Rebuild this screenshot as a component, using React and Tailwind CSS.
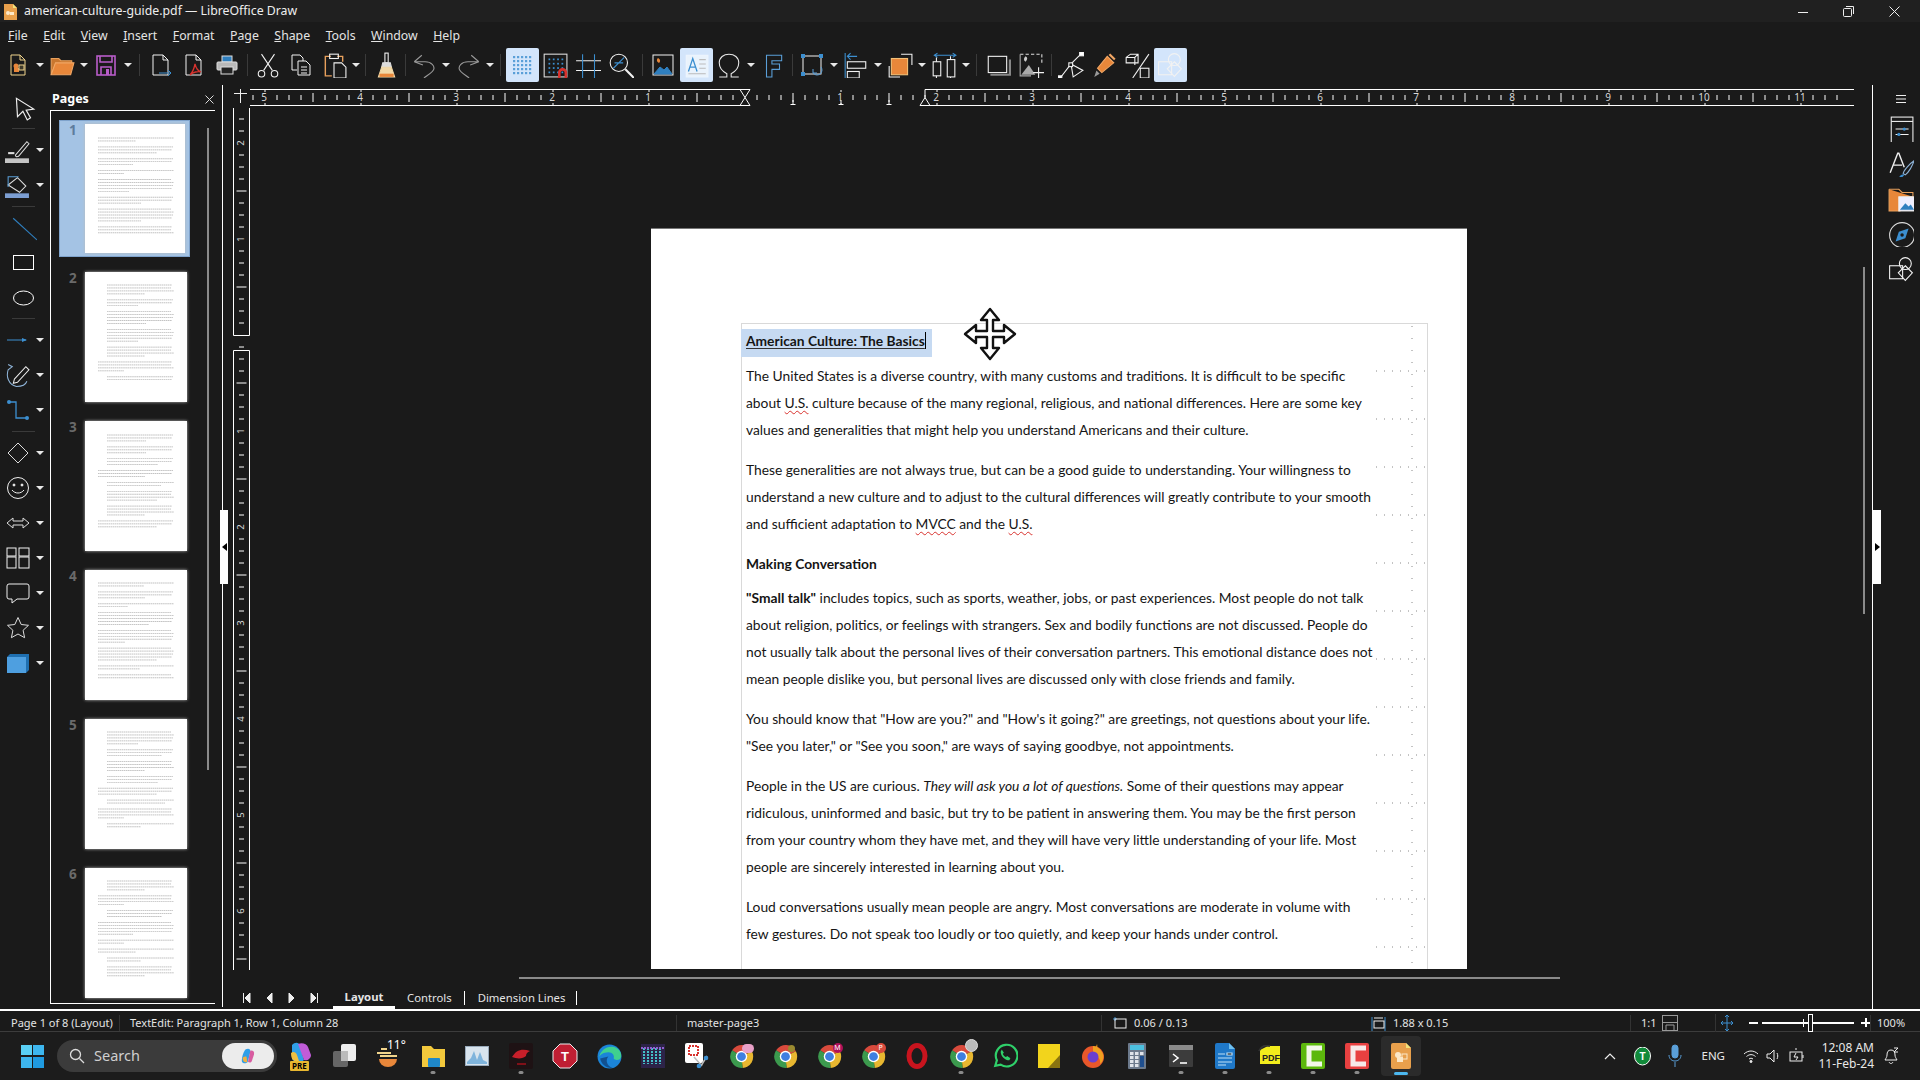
import React from 'react';

// small helpers for the drawn icons
const Svg = ({ size = 24, children, className = '' }) => (
  <svg width={size} height={size} viewBox="0 0 24 24" fill="none" stroke="#f2f2f2" strokeWidth="1" className={className}>
    {children}
  </svg>
);

const Caret = () => <span className="w-0 h-0 border-l-[4px] border-r-[4px] border-t-[4px] border-l-transparent border-r-transparent border-t-[#e8e8e8]" />;

// top toolbar icons
const icons = {
  newDoc: <Svg><path d="M5 2h9l5 5v15H5z" stroke="#f0d48c" /><path d="M14 2v5h5" stroke="#f0d48c" /><circle cx="10" cy="13" r="2.5" fill="#e8873a" stroke="none" /><rect x="8" y="15" width="5" height="4" fill="#e8873a" stroke="none" /><rect x="13" y="12" width="5" height="5" fill="#3f3a2a" stroke="#f0d48c" /></Svg>,
  open: <Svg size={26}><path d="M2 6h7l2 2h10v3H6l-4 10z" fill="#c9772f" stroke="#e8a05c" /><path d="M6 10h17l-3 11H2z" fill="#e8873a" stroke="#f0a765" /></Svg>,
  save: <Svg><rect x="3" y="3" width="18" height="19" stroke="#b85cc9" strokeWidth="1.6" /><path d="M6 3v6h12V3M7 22v-8h10v8" stroke="#b85cc9" strokeWidth="1.6" /><rect x="12" y="16" width="3" height="6" fill="#b85cc9" stroke="none" /></Svg>,
  exportDoc: <Svg><path d="M4 2h10l5 5v15H4z" /><path d="M14 2v5h5" /><path d="M10 20h12m-3-3 3 3-3 3" stroke="#3c8fd0" /></Svg>,
  pdf: <Svg><path d="M4 2h10l5 5v15H4z" /><path d="M14 2v5h5" /><path d="M13 11c-1 5-3 9-5 11 3-3 8-4 11-3-3-1-5-4-6-8z" stroke="#d8322e" strokeWidth="1.3" /></Svg>,
  print: <Svg size={24}><rect x="7" y="3" width="10" height="6" fill="#2f7fbf" stroke="#ddd" /><rect x="2" y="9" width="20" height="8" rx="1" fill="#b9b9b9" stroke="#ddd" /><rect x="6" y="14" width="12" height="7" fill="#222" stroke="#ddd" /></Svg>,
  cut: <Svg size={26}><path d="M6 2l10 15M18 2 8 17" /><circle cx="6" cy="20" r="3" /><circle cx="18" cy="20" r="3" /></Svg>,
  copy: <Svg><path d="M3 2h8l3 3v3M3 2v15h5" /><path d="M9 8h8l4 4v10H9z" /><path d="M12 14h6M12 17h6M12 20h6" /></Svg>,
  paste: <Svg size={26}><path d="M9 4H4v18h6M15 4h5v5" stroke="#e8a05c" strokeWidth="1.3" /><rect x="8" y="2" width="8" height="4" stroke="#f2f2f2" /><path d="M12 10h7l4 4v10H12z" fill="#1a1a1a" /></Svg>,
  clone: <Svg size={26}><rect x="11" y="1" width="3" height="9" fill="#1a1a1a" /><path d="M9 10h7l1 4H8z" fill="#ddd" stroke="#ddd" /><path d="M8 14h9l3 9H5z" fill="#f2d9a8" stroke="#f2d9a8" /><path d="M6 20h13v3H6z" fill="#e8873a" stroke="none" /></Svg>,
  undo: <Svg size={26}><path d="M3 9l7-6M3 9l8 3M3 9h10c6 0 9 4 8 7-1 3-7 6-9 8" stroke="#9a9a9a" /></Svg>,
  redo: <Svg size={26}><path d="M22 9l-7-6M22 9l-8 3M22 9H12c-6 0-9 4-8 7 1 3 7 6 9 8" stroke="#9a9a9a" /></Svg>,
  grid: <Svg><g fill="#5a9fd8" stroke="none">{[4, 8, 12, 16, 20].flatMap((x) => [4, 8, 12, 16, 20].map((y) => <rect key={`${x}-${y}`} x={x - 1} y={y - 1} width="2.2" height="2.2" />))}</g></Svg>,
  snap: <Svg size={26}><rect x="2" y="2" width="21" height="21" stroke="#ddd" /><g fill="#3c8fd0" stroke="none">{[6, 10, 14, 18].flatMap((x) => [6, 10, 14, 18].map((y) => <rect key={`${x}-${y}`} x={x} y={y} width="1.6" height="1.6" />))}</g><path d="M16 24v-5a2.5 2.5 0 0 1 6 0v5" stroke="#d8322e" strokeWidth="2.4" /></Svg>,
  helplines: <Svg size={26}><path d="M1 8h24M1 17h24" /><path d="M7 2v23M18 2v23" stroke="#3c8fd0" /></Svg>,
  zoom: <Svg size={26}><circle cx="10" cy="10" r="8" /><path d="M16 16l8 8" strokeWidth="2" /><path d="M5 15 15 5M6 10h8" stroke="#3c8fd0" /></Svg>,
  image: <Svg size={24}><rect x="2" y="2" width="20" height="20" /><path d="M3 21l6-7 4 3 3-3 5 7z" fill="#2f7fbf" stroke="#2f7fbf" /><path d="M7 5c2 1 3 3 1 5-2-1-3-3-1-5z" fill="#e8873a" stroke="none" /></Svg>,
  textbox: <Svg size={26}><path d="M3 3h20v20H3z" stroke="#eef5fd" fill="#eaf3fc" /><path d="M5 18l4-12 4 12M6.5 14h5" stroke="#3c8fd0" strokeWidth="1.2" /><path d="M15 7h6M15 11h6M15 15h6M5 20h16" stroke="#bbb" /></Svg>,
  omega: <Svg size={26}><path d="M3 23h7v-3c-4-2-7-5-7-10 0-5 4-8 9-8s9 3 9 8c0 5-3 8-7 10v3h7" stroke="#e8e8e8" /></Svg>,
  fontwork: <Svg size={26}><path d="M6 3h14v5h-9v3h7v5h-7v7H6z" stroke="#5a9fd8" /></Svg>,
  transform: <Svg size={24}><rect x="3" y="3" width="18" height="18" /><g fill="#3c8fd0" stroke="none"><rect x="1" y="1" width="4" height="4" /><rect x="19" y="1" width="4" height="4" /><rect x="1" y="19" width="4" height="4" /></g><path d="M21 14a5 5 0 1 1-8 6m0-4v4h4" stroke="#5a9fd8" /></Svg>,
  align: <Svg size={26}><path d="M2 1v24" stroke="#3c8fd0" /><path d="M13 4H4m3-3-3 3 3 3" stroke="#3c8fd0" /><rect x="4" y="9" width="17" height="6" /><rect x="4" y="18" width="11" height="6" /></Svg>,
  arrange: <Svg size={26}><path d="M13 2h10v10M2 13v10h10" /><rect x="4" y="6" width="15" height="15" fill="#e8873a" stroke="#f2c078" /></Svg>,
  distribute: <Svg size={26}><path d="M3 3h20M6 1l-3 2 3 2M20 1l3 2-3 2" stroke="#3c8fd0" /><rect x="2" y="9" width="7" height="13" /><rect x="15" y="7" width="7" height="16" /><path d="M5 5v4M5 22v2M18 4v3M18 23v1" /></Svg>,
  shadow: <Svg size={26}><rect x="3" y="4" width="17" height="15" /><path d="M5 21h18V7" stroke="#888" strokeWidth="2" /></Svg>,
  crop: <Svg size={26}><path d="M2 2h20v10" stroke="#ddd" strokeDasharray="3 2" /><path d="M2 2v20h10" stroke="#aaa" /><path d="M3 21l7-9 6 9z" fill="#aaa" stroke="none" /><path d="M7 4c2 1 2 3 0 5-2-1-2-3 0-5z" fill="#ccc" stroke="none" /><path d="M14 19h10M19 14v10" /></Svg>,
  points: <Svg size={26}><path d="M2 24 12 11 22 1" /><path d="M12 11l2 12 9-6z" /><rect x="0" y="22" width="3.5" height="3.5" fill="#fff" /><rect x="20" y="0" width="3.5" height="3.5" fill="#fff" /><rect x="10" y="10" width="3.5" height="3.5" fill="#1a1a1a" /></Svg>,
  glue: <Svg size={26}><path d="M3 23l2-6 3 3z" fill="#999" stroke="none" /><path d="M6 15 15 4l6 6-11 9z" fill="#e8873a" stroke="#f2a765" /><path d="M17 2l5 5" stroke="#f2a765" strokeWidth="2" /></Svg>,
  extrusion: <Svg size={26}><path d="M2 5l4-3h7v8H2zM2 5h8v7M13 2l-3 3" /><path d="M23 2 8 24" /><rect x="15" y="15" width="8" height="9" /></Svg>,
  shapes: <Svg size={26}><rect x="1.5" y="9" width="12" height="12" /><circle cx="16" cy="7" r="5.5" /><path d="M16 9l6.5 6.5-6.5 7-6.5-7z" /></Svg>,
};

const toolbar = [
  ['i', 'newDoc'], 'd', ['i', 'open'], 'd', ['i', 'save'], 'd', ['s', 'w-[11px]'],
  ['i', 'exportDoc'], ['i', 'pdf'], ['i', 'print'], ['s', 'w-[8px]'],
  ['i', 'cut'], ['i', 'copy'], ['i', 'paste'], 'd', ['s', 'w-[8px]'],
  ['i', 'clone'], ['s', 'w-[5px]'],
  ['i', 'undo'], 'd', ['i', 'redo'], 'd', ['s', 'w-[10px]'],
  ['a', 'grid'], ['i', 'snap'], ['i', 'helplines'], ['i', 'zoom'], ['s', 'w-[9px]'],
  ['i', 'image'], ['a', 'textbox'], ['i', 'omega'], 'd', ['i', 'fontwork'], ['s', 'w-[6px]'],
  ['i', 'transform'], 'd', ['i', 'align'], 'd', ['i', 'arrange'], 'd', ['i', 'distribute'], 'd', ['s', 'w-[10px]'],
  ['i', 'shadow'], ['i', 'crop'], ['s', 'w-[7px]'],
  ['i', 'points'], ['i', 'glue'], ['i', 'extrusion'], ['a', 'shapes'],
];

const Toolbar = () => (
  <div className="flex items-center h-[39px] pl-[1.5px] pb-[2px] bg-[#1a1a1a]">
    {toolbar.map((item, i) => {
      if (item === 'd') return <div key={i} className="w-[11px] flex justify-center"><Caret /></div>;
      const [kind, name] = item;
      if (kind === 's') return <div key={i} className={`${name} flex justify-center`}><div className="w-px h-[22px] bg-[#3a3a3a]" /></div>;
      return (
        <div key={i} className={`w-[33px] h-[34px] flex items-center justify-center rounded-[2px] ${kind === 'a' ? 'bg-[#d3e5fb]' : ''}`}>
          {icons[name]}
        </div>
      );
    })}
  </div>
);

const menus = [['F', 'ile'], ['E', 'dit'], ['V', 'iew'], ['I', 'nsert'], ['F', 'ormat'], ['P', 'age'], ['S', 'hape'], ['T', 'ools'], ['W', 'indow'], ['H', 'elp']];

const HRuler = () => {
  const ticks = [];
  for (let x = 746 - 12 * 41; x < 1850; x += 12) {
    const k = Math.round((x - 746) / 12);
    if (x < 252) continue;
    const px = x - 251;
    const inMargin = x > 746 && x < 926;
    if (k % 8 === 0) {
      const n = Math.abs(k / 8);
      ticks.push(<path key={x} d={`M${px} 1v2M${px} 14v2`} stroke="#fff" />);
      if (n !== 0) ticks.push(<text key={`t${x}`} x={px - 1} y="12" fontSize="10" fill="#d8d8d8" textAnchor="middle" fontFamily="Noto Sans, sans-serif">{n}</text>);
    } else if (k % 4 === 0) {
      ticks.push(<path key={x} d={`M${px} 4v9`} stroke="#fff" />);
    } else {
      ticks.push(<path key={x} d={`M${px} 6v5`} stroke="#fff" />);
    }
    if (inMargin && k % 4 === 0) ticks.push(<path key={`b${x}`} d={`M${px} 11v5M${px - 2.5} 15.5h5`} stroke="#fff" />);
  }
  return (
    <svg width="1605" height="17" className="block">
      <path d="M0 .5H491M675 .5H1604M0 16.5H491M675 16.5H1604" stroke="#fff" />
      {ticks}
      <path d="M490 .5h10l-5 8 5 8h-10l5-8z" stroke="#fff" fill="#1a1a1a" />
      <path d="M670 16.5h10l-5-8z" stroke="#fff" fill="#1a1a1a" />
      <path d="M675 8V.5" stroke="#fff" />
    </svg>
  );
};

const VRuler = () => {
  const marks = [];
  for (let k = -19; k < 64; k++) {
    const y = 230 + k * 12;
    if (y < 6 || y > 864 || k === 0) continue;
    if (k % 8 === 0) {
      marks.push(<text key={k} x="8.5" y={y} fontSize="9.5" fill="#d8d8d8" textAnchor="middle" dominantBaseline="middle" fontFamily="Noto Sans, sans-serif" transform={`rotate(-90 8.5 ${y})`}>{Math.abs(k / 8)}</text>);
    } else if (k % 4 === 0) {
      marks.push(<path key={k} d={`M3.5 ${y}h10`} stroke="#fff" />);
    } else {
      marks.push(<path key={k} d={`M6 ${y}h5`} stroke="#fff" />);
    }
  }
  return (
    <svg width="17" height="865" className="block">
      <path d="M.5 3v227.5h16V3" stroke="#fff" fill="none" />
      <path d="M.5 865V245.5h16V865" stroke="#fff" fill="none" />
      {marks}
    </svg>
  );
};

// miniature page: paragraphs of thin grey lines
const thumbLines = (n) => {
  const out = [];
  let seed = n * 13 + 5;
  let y = n === 1 || n === 3 ? 14 : 13;
  const bullets = n === 2 || n === 3 || n === 5 || n === 6;
  while (y < 109) {
    seed = (seed * 31 + 11) % 97;
    const count = 2 + (seed % 4);
    const indent = bullets && seed % 3 !== 0 ? 9 : 0;
    for (let i = 0; i < count && y < 109; i++) {
      const full = 76 - indent;
      const w = i === count - 1 ? 26 + ((seed * (i + 3)) % 36) : full - ((seed + i * 5) % 4);
      out.push([indent, y, w]);
      y += 2.95;
    }
    y += 3;
  }
  return out;
};

const Thumb = ({ n, selected }) => (
  <div className={`flex w-[131px] ml-[8px] ${selected ? 'h-[137px] mb-[15px] bg-[#a4c3e4] border border-[#7fa3cc] pl-[9px] pt-[3px]' : 'h-[131px] mb-[18px] pl-[10px]'}`}>
    <div className={`w-[16px] text-[13.5px] font-bold leading-[12px] ${selected ? 'text-[#5e7c9d]' : 'text-[#6a6a6a]'}`}>{n}</div>
    <svg width={selected ? 100 : 102} height={selected ? 129 : 130} className="bg-white shadow-[0_0_3px_#bbb] shrink-0">
      {thumbLines(n).map(([x, y, w], i) => (
        <path key={i} d={`M${13 + x} ${y}h${w}`} stroke="#666" strokeWidth="0.6" strokeDasharray="1.6 0.5" opacity="0.65" />
      ))}
    </svg>
  </div>
);

const PagesPanel = () => (
  <div className="w-[165px] flex flex-col h-full pb-[5px]">
    <div className="h-[25px] flex items-center justify-between pl-[2px] pr-[1px] pt-[3px] text-white text-[12.5px] font-bold">
      <span>Pages</span>
      <svg width="9" height="9" viewBox="0 0 9 9" stroke="#ddd"><path d="M.5.5l8 8M8.5.5l-8 8" /></svg>
    </div>
    <div className="relative flex-1 border-t border-l border-b border-white overflow-hidden pt-[9px]">
      {[1, 2, 3, 4, 5, 6].map((n) => <Thumb key={n} n={n} selected={n === 1} />)}
      <div className="absolute right-[6px] top-[17px] w-[2px] h-[642px] bg-[#8a8a8a]" />
    </div>
  </div>
);

const toolIcons = [
  { i: <Svg size={26}><path d="M5 3l1 17 5-5 4 8 3-2-4-7 7-1z" stroke="#eee" strokeWidth="1.1" /></Svg>, c: true },
  'sep',
  { i: <Svg size={26}><path d="M10 17 21 4l2 2-10 12c-2 1-3 0-3-1z" stroke="#ddd" /><path d="M3 15h6" stroke="#ddd" strokeWidth="2" /><rect x="0" y="20" width="23" height="5" fill="#c4c4c4" stroke="none" /></Svg> },
  { i: <Svg size={26}><path d="M3 12 12 5l8 8-6 6z" stroke="#ddd" /><path d="M3 14V4h10" stroke="#5a9fd8" /><rect x="0" y="20" width="23" height="5" fill="#7c9ed2" stroke="none" /></Svg> },
  'sep',
  { i: <Svg size={26}><path d="M2 3l22 20" stroke="#2f7fbf" /></Svg>, c: true },
  { i: <svg width="22" height="16"><rect x=".5" y=".5" width="20" height="14" stroke="#fff" fill="none" /></svg>, c: true },
  { i: <svg width="22" height="16"><ellipse cx="10.5" cy="8" rx="10" ry="7" stroke="#fff" fill="none" /></svg>, c: true },
  'sep',
  { i: <Svg><path d="M1 12h19" stroke="#3c8fd0" /><path d="M16 10l5 2-5 2z" fill="#3c8fd0" stroke="none" /></Svg> },
  { i: <Svg size={26}><path d="M3 2l4 2-4 3c-2 6 0 14 8 16 5 0 9-2 10-5" stroke="#8fb4d8" /><path d="M9 16 20 4l3 3-11 12-4 1z" stroke="#eee" /></Svg> },
  { i: <Svg><circle cx="3" cy="4" r="2" fill="#3c8fd0" stroke="none" /><circle cx="21" cy="20" r="2" fill="#3c8fd0" stroke="none" /><path d="M3 4h7v16h11" stroke="#3c8fd0" strokeWidth="1.3" /></Svg> },
  'sep',
  { i: <Svg><path d="M12 2l10 10-10 10L2 12z" stroke="#ddd" /></Svg> },
  { i: <Svg><circle cx="12" cy="12" r="10.5" stroke="#eee" /><circle cx="8" cy="9" r="1" fill="#eee" /><circle cx="16" cy="9" r="1" fill="#eee" /><path d="M6 14c3 4 9 4 12 0" /></Svg> },
  { i: <Svg size={24}><path d="M1 12l6-5v3h10V7l6 5-6 5v-3H7v3z" stroke="#ddd" /></Svg> },
  { i: <Svg><rect x="1" y="2" width="9" height="8" /><rect x="13" y="2" width="10" height="8" /><rect x="1" y="11" width="9" height="11" /><rect x="13" y="11" width="10" height="11" /></Svg> },
  { i: <Svg><path d="M3 3h18a2 2 0 0 1 2 2v11a2 2 0 0 1-2 2H11l-5 4v-4H3a2 2 0 0 1-2-2V5a2 2 0 0 1 2-2z" stroke="#eee" /></Svg> },
  { i: <Svg><path d="M12 1.5l3.2 7 7.3.8-5.4 5 1.5 7.4L12 18l-6.6 3.7 1.5-7.4-5.4-5 7.3-.8z" stroke="#ddd" /></Svg> },
  { i: <Svg><path d="M1 6l3-3h19v16l-3 3H1z" fill="#1f6fb0" stroke="none" /><path d="M1 6h19v16H1z" fill="#4e9fe0" stroke="none" /></Svg> },
];

const LeftTools = () => (
  <div className="w-[50px] flex flex-col pt-[5px]">
    {toolIcons.map((t, i) => {
      if (t === 'sep') return <div key={i} className="h-[7.5px] flex items-center pl-[12px]"><div className="w-[23px] h-px bg-[#3a3a3a]" /></div>;
      return (
        <div key={i} className={`h-[35px] flex items-center ${t.c ? 'justify-center pr-[2px]' : 'pl-[5px] gap-[6px]'}`}>
          <div className={`flex justify-center ${t.c ? '' : 'w-[25px]'}`}>{t.i}</div>
          {!t.c && <Caret />}
        </div>
      );
    })}
  </div>
);

const Squiggle = ({ children }) => <span className="underline decoration-wavy decoration-[#d8322e] decoration-1 underline-offset-2">{children}</span>;

const Line = ({ children, className = '' }) => (
  <div className={`h-[27px] leading-[27px] whitespace-nowrap ${className}`}>{children}</div>
);

const DocGuides = () => (
  <svg width="52" height="660" className="absolute right-0 top-0">
    <path d="M37 2V660" stroke="#888" strokeDasharray="1 11" />
    {Array.from({ length: 13 }).map((_, i) => (
      <path key={i} d={`M1 ${47 + i * 48}H50`} stroke="#888" strokeDasharray="1 7" />
    ))}
  </svg>
);

const Page = () => (
  <div className="ml-[401px] mt-[123px] w-[816px] h-[1056px] bg-white shrink-0 pl-[90px] pt-[94px] border-t border-[#777]">
    <div className="relative w-[687px] h-[900px] border border-[#d9d9d9] pt-[3px] pl-[4px] font-['Lato',sans-serif] text-[13.8px] text-[#151515]">
      <div className="h-[27px] mb-[8px] leading-[27px] relative">
        <span className="absolute -left-[5px] top-[2px] w-[191px] h-[28px] bg-[#c6daf2]" />
        <span className="relative font-bold underline decoration-[#333] underline-offset-2 border-r border-black whitespace-nowrap">American Culture: The Basics</span>
      </div>
      <div className="mb-[13px]">
        <Line>The United States is a diverse country, with many customs and traditions. It is difficult to be specific</Line>
        <Line>about <Squiggle>U.S.</Squiggle> culture because of the many regional, religious, and national differences. Here are some key</Line>
        <Line>values and generalities that might help you understand Americans and their culture.</Line>
      </div>
      <div className="mb-[13px]">
        <Line>These generalities are not always true, but can be a good guide to understanding. Your willingness to</Line>
        <Line>understand a new culture and to adjust to the cultural differences will greatly contribute to your smooth</Line>
        <Line>and sufficient adaptation to <Squiggle>MVCC</Squiggle> and the <Squiggle>U.S.</Squiggle></Line>
      </div>
      <Line className="mb-[7px] font-bold">Making Conversation</Line>
      <div className="mb-[13px]">
        <Line><b>"Small talk"</b> includes topics, such as sports, weather, jobs, or past experiences. Most people do not talk</Line>
        <Line>about religion, politics, or feelings with strangers. Sex and bodily functions are not discussed. People do</Line>
        <Line>not usually talk about the personal lives of their conversation partners. This emotional distance does not</Line>
        <Line>mean people dislike you, but personal lives are discussed only with close friends and family.</Line>
      </div>
      <div className="mb-[13px]">
        <Line>You should know that "How are you?" and "How's it going?" are greetings, not questions about your life.</Line>
        <Line>"See you later," or "See you soon," are ways of saying goodbye, not appointments.</Line>
      </div>
      <div className="mb-[13px]">
        <Line>People in the US are curious. <i>They will ask you a lot of questions.</i> Some of their questions may appear</Line>
        <Line>ridiculous, uninformed and basic, but try to be patient in answering them. You may be the first person</Line>
        <Line>from your country whom they have met, and they will have very little understanding of your life. Most</Line>
        <Line>people are sincerely interested in learning about you.</Line>
      </div>
      <div className="mb-[13px]">
        <Line>Loud conversations usually mean people are angry. Most conversations are moderate in volume with</Line>
        <Line>few gestures. Do not speak too loudly or too quietly, and keep your hands under control.</Line>
      </div>
      <Line className="font-bold">Friendship and Dating</Line>
      <DocGuides />
    </div>
  </div>
);

const MoveCursor = () => (
  <svg width="54" height="54" viewBox="0 0 54 54" className="absolute left-[713px] top-[202px]">
    <path d="M27 2l9 11h-6v11h11v-6l11 9-11 9v-6H30v11h6l-9 11-9-11h6V30H13v6L2 27l11-9v6h11V13h-6z" fill="#fff" stroke="#111" strokeWidth="2.4" strokeLinejoin="round" />
  </svg>
);

const Handle = ({ dir, className }) => (
  <div className={`absolute w-[8px] h-[74px] bg-white flex items-center justify-center ${className}`}>
    <span className={`w-0 h-0 border-t-[4px] border-b-[4px] border-t-transparent border-b-transparent ${dir === 'l' ? 'border-r-[5px] border-r-black' : 'border-l-[5px] border-l-black'}`} />
  </div>
);

const sideIcons = [
  <Svg size={26}><rect x="3" y="1" width="20" height="24" stroke="#eee" /><path d="M3 5h20" /><path d="M7 12h12M7 17h12" /><circle cx="15" cy="12" r="1.5" fill="#3c8fd0" stroke="none" /><circle cx="10" cy="17" r="1.5" fill="#3c8fd0" stroke="none" /></Svg>,
  <Svg size={26}><path d="M2 20 9 2h1l5 13M5 13h8" stroke="#eee" strokeWidth="1.3" /><path d="M14 21c0-3 7-10 10-12-1 4-5 11-8 13z" stroke="#8fb4d8" /><path d="M10 25c1-3 3-4 5-3-1 2-3 3-5 3z" fill="#3c8fd0" stroke="none" /></Svg>,
  <Svg size={26}><path d="M1 3h9l3 3h10v4" stroke="#e8a05c" /><path d="M1 3v20h10V10h12" fill="#e8873a" stroke="#e8a05c" /><rect x="10" y="10" width="14" height="13" fill="#eef" stroke="#eee" /><path d="M11 22l5-6 3 3 2-2 3 5z" fill="#2f7fbf" stroke="none" /></Svg>,
  <Svg size={26}><circle cx="13" cy="13" r="11.5" stroke="#ddd" /><path d="M19 7l-9 3-3 9 9-3z" fill="#3c8fd0" stroke="none" /><circle cx="13" cy="13" r="1.6" fill="#1a1a1a" stroke="none" /></Svg>,
  icons.shapes,
];

const Sidebar = () => (
  <div className="w-[48px] border-l border-white flex flex-col items-center pl-[8px] pt-[6px] h-full">
    <svg width="12" height="10" className="mb-[12px] mt-[3px]" stroke="#eee"><path d="M1 1.5h10M1 5h10M1 8.5h10" /></svg>
    <div className="flex flex-col gap-[9px]">
      {sideIcons.map((ic, i) => <div key={i} className="w-[26px] h-[26px]">{ic}</div>)}
    </div>
  </div>
);

const Status = () => (
  <div className="flex items-center h-[21px] pt-[4px] text-[11px] text-[#e4e4e4] border-b border-[#3c3c3c] whitespace-nowrap">
    <div className="w-[119px] pl-[11px]">Page 1 of 8 (Layout)</div>
    <div className="w-[557px] pl-[10px] border-l border-[#333]">TextEdit: Paragraph 1, Row 1, Column 28</div>
    <div className="w-[425px] pl-[10px] border-l border-[#333]">master-page3</div>
    <div className="w-[260px] pl-[10px] border-l border-[#333] flex items-center gap-[7px]">
      <svg width="15" height="15" fill="none"><path d="M1 3h4M3 1v4" stroke="#3c8fd0" /><rect x="3" y="3" width="11" height="9" stroke="#eee" /></svg>
      <span>0.06 / 0.13</span>
    </div>
    <div className="w-[269px] pl-[10px] flex items-center gap-[7px]">
      <svg width="15" height="15" fill="none"><path d="M1 1v14M14 1v14" stroke="#3c8fd0" /><rect x="3" y="5" width="10" height="7" stroke="#eee" /><path d="M3 2h9" stroke="#eee" /></svg>
      <span>1.88 x 0.15</span>
    </div>
    <div className="w-[32px] pl-[10px] border-l border-[#333]">1:1</div>
    <div className="w-[53px]">
      <svg width="16" height="20" fill="none" stroke="#999"><rect x=".5" y="2.5" width="15" height="15" /><path d="M.5 9.5h15M4 17V12h8v5" /></svg>
    </div>
    <div className="w-[34px] pl-[4px] border-l border-[#333] flex">
      <svg width="14" height="18" fill="none" stroke="#3c8fd0"><path d="M7 1v16M1 9h12M5 3l2-2 2 2M5 15l2 2 2-2M3 7 1 9l2 2M11 7l2 2-2 2" /></svg>
    </div>
    <div className="w-[121px] flex items-center">
      <div className="w-[9px] h-[2px] bg-white" />
      <div className="relative w-[98px] h-[2px] bg-white ml-[4px] mr-[7px]">
        <span className="absolute left-[41px] -top-[3px] h-[8px] w-px bg-white" />
        <span className="absolute left-[46px] -top-[8px] h-[18px] w-[5px] border border-white bg-[#1a1a1a]" />
      </div>
      <div className="relative w-[9px] h-[2px] bg-white"><span className="absolute left-[4px] -top-[4px] w-[2px] h-[9px] bg-white" /></div>
    </div>
    <div className="pl-[6px] border-l border-[#333]">100%</div>
  </div>
);

const chrome = (badge) => (
  <span className="relative block w-[25px] h-[25px]">
    <svg width="25" height="25" viewBox="0 0 24 24">
      <path d="M12 12 3 6a11 11 0 0 1 19 1z" fill="#d84a3c" />
      <path d="M12 12l10-5a11 11 0 0 1-9 16z" fill="#e8b730" />
      <path d="M12 12l1 11A11 11 0 0 1 3 6z" fill="#3c9a4e" />
      <circle cx="12" cy="12" r="5.5" fill="#fff" />
      <circle cx="12" cy="12" r="4.2" fill="#3f7fe0" />
    </svg>
    {badge}
  </span>
);

const taskApps = [
  { i: <span className="relative block w-[24px] h-[30px]"><svg width="24" height="24" viewBox="0 0 24 24"><path d="M3 4c3-3 7-3 8 1l4 14c-3 3-9 3-12-1z" fill="#2f9fe8" /><path d="M9 3c4-2 9 0 10 3l3 8c0 4-4 6-7 5z" fill="#c05cd8" /><path d="M2 12c2-2 5-1 6 2l2 6c-4 1-8 0-8-8z" fill="#f0c040" /></svg><span className="absolute bottom-0 left-[1px] bg-[#e8b730] text-black text-[8px] leading-[10px] font-bold px-[2px] rounded-[1px]">PRE</span></span> },
  { i: <svg width="26" height="24"><rect x="9" y="0" width="15" height="17" rx="2" fill="#eee" /><rect x="1" y="7" width="15" height="16" rx="2" fill="#666" /><rect x="9" y="7" width="7" height="10" fill="#bbb" /></svg> },
  { i: <span className="relative block w-[28px] h-[26px]"><svg width="24" height="24" viewBox="0 0 24 24" className="absolute left-0 bottom-0"><path d="M4 14h18a9 8 0 0 1-18 0z" fill="#e8873a" /><path d="M6 4h6M2 8h14M5 11h17" stroke="#f0d48c" strokeWidth="2" /></svg><span className="absolute -top-[7px] left-[12px] text-[12px] text-white">11°</span></span> },
  { i: <svg width="25" height="24"><path d="M1 2h9l3 3h11v18H1z" fill="#f2c83c" /><rect x="7" y="14" width="12" height="9" rx="1" fill="#1f88c8" /></svg>, dot: true },
  { i: <svg width="24" height="20"><rect x=".5" y=".5" width="23" height="19" fill="#d8e4ee" stroke="#9ab" /><path d="M2 16l4-4 3-7 3 9 3-8 3 8 4 2v2H2z" fill="#7fb4dc" /></svg> },
  { i: <svg width="24" height="26"><rect width="24" height="26" rx="2" fill="#1e1214" /><path d="M3 14c4-7 10-9 18-6-3 1-4 3-4 5-3 3-9 3-14 1z" fill="#c81f2a" /><path d="M8 21h9" stroke="#801018" strokeWidth="2" /></svg>, dot: true },
  { i: <svg width="26" height="26" viewBox="0 0 26 26"><path d="M8 1h10l7 7v10l-7 7H8l-7-7V8z" fill="#c01f33" stroke="#eee" /><text x="13" y="18" fontSize="13" fontWeight="700" fill="#fff" textAnchor="middle" fontFamily="Liberation Sans, sans-serif">T</text></svg> },
  { i: <svg width="25" height="25" viewBox="0 0 24 24"><circle cx="12" cy="12" r="11.5" fill="#1b84d8" /><path d="M2 13C3 5 12 0 19 4c3 2 5 5 4 9-1 3-6 3-7 1 1-3-1-6-5-6-5 0-9 3-9 5z" fill="#3fd08f" /><path d="M11 12c-3 3-2 9 4 11-5 1-11-3-12-9z" fill="#12508f" /></svg> },
  { i: <svg width="24" height="24"><rect width="24" height="24" fill="#2c2348" />{[3, 7, 11, 15, 19].map((x) => <path key={x} d={`M${x} 4v16`} stroke="#44c0c8" strokeWidth="2" strokeDasharray="2 1" />)}<path d="M0 4h24" stroke="#8f5fd0" strokeWidth="2" strokeDasharray="2 1" /></svg> },
  { i: <svg width="24" height="26"><rect x="0" y="0" width="18" height="20" rx="2" fill="#fff" /><rect x="4" y="3" width="9" height="9" fill="none" stroke="#d8322e" strokeWidth="2" strokeDasharray="2 1" /><path d="M9 14l8 9M22 13l-6 10" stroke="#bbb" strokeWidth="1.5" /><circle cx="14" cy="23" r="2.3" fill="#3c8fd0" /><circle cx="21" cy="15" r="2.3" fill="#3c8fd0" /></svg> },
  { i: chrome(<span className="absolute top-0 right-0 w-[12px] h-[9px] rounded-full bg-[#e8a0c8]" />) },
  { i: chrome(<span className="absolute top-[1px] right-[3px] w-[7px] h-[7px] rounded-full bg-[#9a8a30]" />) },
  { i: chrome(<span className="absolute -top-[1px] -right-[1px] w-[10px] h-[10px] rounded-full bg-[#b0105a] text-white text-[7px] leading-[10px] text-center">M</span>) },
  { i: chrome(<span className="absolute -top-[1px] right-0 w-[10px] h-[10px] rounded-full bg-[#d84a3c] text-white text-[7px] leading-[10px] text-center">P</span>) },
  { i: <svg width="22" height="26"><ellipse cx="11" cy="13" rx="8" ry="10.5" fill="none" stroke="#c8141e" strokeWidth="5" /></svg> },
  { i: chrome(<span className="absolute -top-[5px] -right-[4px] w-[13px] h-[13px] rounded-full bg-[#bbb] border border-[#ddd]" />), dot: true },
  { i: <svg width="26" height="26" viewBox="0 0 24 24" fill="none"><path d="M3 21l1.5-5A10 10 0 1 1 8 20z" stroke="#2fd06a" strokeWidth="2" /><path d="M8 8c0 4 4 8 8 8l1-2-3-2-1 1c-1 0-3-2-3-3l1-1-2-3z" fill="#2fd06a" /></svg> },
  { i: <svg width="22" height="24"><rect width="22" height="24" fill="#f2d41c" /><path d="M22 11v13H10z" fill="#8a7410" /></svg> },
  { i: <svg width="24" height="26" viewBox="0 0 24 26"><circle cx="12" cy="14" r="11" fill="#e8572a" /><path d="M12 3c4 0 8 3 10 8 1 3 0 8-3 10 1-5-2-8-7-9z" fill="#f0a020" /><circle cx="12" cy="14" r="5.5" fill="#6a3fd0" /><path d="M16 1c1 3 0 5-2 6z" fill="#f0a020" /></svg> },
  { i: <svg width="18" height="26"><rect width="18" height="26" rx="1" fill="#6c7a8c" /><rect x="2" y="2" width="14" height="5" fill="#4cc0e0" /><g fill="#e0e4ea">{[9, 13, 17, 21].flatMap((y) => [2, 7, 12].map((x) => <rect key={`${x}-${y}`} x={x} y={y} width="3.5" height="3" />))}</g><rect x="12" y="13" width="4" height="11" fill="#1f4f8f" /></svg> },
  { i: <svg width="24" height="22"><rect width="24" height="22" rx="1" fill="#3c3c3c" /><rect width="24" height="5" fill="#8a8a8a" /><path d="M4 9l5 4-5 4" stroke="#fff" strokeWidth="1.6" fill="none" /><path d="M11 18h7" stroke="#fff" strokeWidth="1.6" /></svg>, dot: true },
  { i: <svg width="20" height="26"><path d="M2 0h12l6 6v18a2 2 0 0 1-2 2H2a2 2 0 0 1-2-2V2a2 2 0 0 1 2-2z" fill="#1f78c8" /><path d="M14 0l6 6h-6z" fill="#6fc0ef" /><path d="M3 11h7M3 15h14M3 19h14M3 22h8M12 10h5v2h-5z" stroke="#bfe0f6" strokeWidth="1.2" /></svg>, dot: true },
  { i: <svg width="22" height="22"><path d="M2 5l8-4h12v18H2z" fill="#f2ec1c" /><path d="M1 6C3 1 8 0 12 1" stroke="#333" strokeWidth="2" fill="none" /><text x="4" y="16" fontSize="9" fontWeight="700" fill="#222" fontFamily="Liberation Sans, sans-serif">PDF</text></svg>, dot: true },
  { i: <svg width="24" height="26"><rect width="24" height="26" rx="2" fill="#5cb80c" /><path d="M21 5H8v16h13" stroke="#f2f7e8" strokeWidth="5" fill="none" /></svg>, dot: true },
  { i: <svg width="24" height="26"><rect width="24" height="26" rx="2" fill="#e84040" /><path d="M21 5H8v16h13" stroke="#f7e8e8" strokeWidth="5" fill="none" /></svg>, dot: true },
  { i: <svg width="20" height="26"><path d="M2 0h13l5 5v19a2 2 0 0 1-2 2H2a2 2 0 0 1-2-2V2a2 2 0 0 1 2-2z" fill="#e8a04c" /><path d="M15 0l5 5h-5z" fill="#f2e27c" /><circle cx="7" cy="12" r="3" fill="#fbe8c8" /><rect x="6" y="14" width="6" height="5" fill="#fbe8c8" /><rect x="11" y="11" width="5" height="5" fill="none" stroke="#fbe8c8" /></svg>, active: true },
];

const TaskBar = () => (
  <div className="flex items-center h-[48px] bg-[#1c1c1c] text-[#e8e8e8] whitespace-nowrap">
    <div className="ml-[21px] w-[23px] h-[23px] grid grid-cols-2 gap-[1.5px]">
      <span className="bg-[#5ad0f5]" /><span className="bg-[#3db6ee]" /><span className="bg-[#3db6ee]" /><span className="bg-[#1f9ae0]" />
    </div>
    <div className="ml-[13px] w-[220px] h-[32px] rounded-full bg-[#3b3b3b] flex items-center pl-[12px] pr-[3px] text-[14.5px] text-[#cfcfcf]">
      <svg width="16" height="16" viewBox="0 0 16 16" fill="none" stroke="#ddd" strokeWidth="1.3"><circle cx="6.5" cy="6.5" r="5" /><path d="M10.5 10.5 15 15" /></svg>
      <span className="ml-[9px]">Search</span>
      <div className="ml-auto w-[52px] h-[26px] rounded-full bg-[#ececec] flex items-center justify-center">
        <svg width="18" height="20" viewBox="0 0 24 24"><path d="M9 3c4-2 7 0 6 4l-3 12c-1 3-6 4-8 1-1-3 1-13 5-17z" fill="#2f9fe8" /><path d="M15 5c3-1 6 1 5 5l-3 9c-1 2-3 2-5 1z" fill="#d85ca0" /><path d="M5 15c0-2 3-3 5-2l1 7c-3 1-6 0-6-5z" fill="#f0b040" /></svg>
      </div>
    </div>
    <div className="ml-[2px] flex h-full">
      {taskApps.map((a, i) => (
        <div key={i} className={`relative w-[44px] flex items-center justify-center ${a.active ? 'before:absolute before:inset-x-[2px] before:inset-y-[4px] before:bg-[#2b2b2b] before:rounded-[4px]' : ''}`}>
          <span className="relative">{a.i}</span>
          {a.dot && <span className="absolute bottom-[6px] left-1/2 -translate-x-1/2 w-[5px] h-[3px] rounded-full bg-[#8a8a8a]" />}
          {a.active && <span className="absolute bottom-[5px] left-1/2 -translate-x-1/2 w-[14px] h-[3px] rounded-full bg-[#4cb8f0]" />}
        </div>
      ))}
    </div>
    <div className="ml-auto flex items-center h-full">
      <svg width="12" height="8" fill="none" stroke="#eee" strokeWidth="1.2"><path d="M1 7l5-5 5 5" /></svg>
      <svg width="17" height="19" viewBox="0 0 17 19" className="ml-[18px]"><path d="M8.5 0a8 9 0 0 1 0 18 8 9 0 0 1 0-18z" fill="#118a3a" stroke="#fff" /><text x="8.5" y="13" fontSize="10" fontWeight="700" fill="#fff" textAnchor="middle" fontFamily="Liberation Sans, sans-serif">T</text></svg>
      <svg width="14" height="24" viewBox="0 0 14 24" fill="none" stroke="#5a9fd8" className="ml-[17px]"><rect x="4" y="1" width="6" height="13" rx="3" fill="#5a9fd8" /><path d="M1 11c0 8 12 8 12 0M7 18v5" /></svg>
      <span className="ml-[19px] text-[11.5px]">ENG</span>
      <svg width="16" height="14" viewBox="0 0 16 14" fill="none" stroke="#eee" className="ml-[18px]"><path d="M1 5c4-4 10-4 14 0M3.5 7.5c3-2.5 6-2.5 9 0M6 10c1.5-1 2.5-1 4 0" /><circle cx="8" cy="12.5" r="1" fill="#eee" /></svg>
      <svg width="15" height="16" viewBox="0 0 15 16" fill="none" stroke="#eee" className="ml-[7px]"><path d="M1 6h3l4-4v12l-4-4H1zM11 5c1 2 1 4 0 6" /></svg>
      <svg width="16" height="16" viewBox="0 0 16 16" fill="none" stroke="#eee" className="ml-[8px]"><rect x="1" y="4" width="12" height="9" /><path d="M6 1h2M14 7v3M7 5 5 9h4l-2 3" /></svg>
      <div className="ml-[5px] w-[64px] text-right text-[12px] leading-[16px]">
        <div>12:08 AM</div>
        <div>11-Feb-24</div>
      </div>
      <svg width="15" height="18" viewBox="0 0 15 18" fill="none" stroke="#eee" className="ml-[10px] mr-[21px]"><path d="M7 3c-3 0-4 2-4 5 0 2-1 3-2 5h12c-1-2-2-3-2-5 0-3-1-5-4-5zM5 15c1 2 3 2 4 0M10 1h4l-4 4h4" /></svg>
    </div>
  </div>
);

export default function App() {
  return (
    <div className="w-[1920px] h-[1080px] flex flex-col bg-[#1a1a1a] overflow-hidden font-['Noto_Sans',sans-serif] text-white">
      {/* title bar */}
      <div className="h-[22px] bg-[#202020] flex items-center pt-[1px] text-[12.3px] text-[#eee] relative">
        <svg width="14" height="16" viewBox="0 0 14 16" className="ml-[3px] mr-[7px]"><path d="M1 0h9l4 4v12H1z" fill="#e8a04c" /><path d="M10 0l4 4h-4z" fill="#f2e27c" /><circle cx="5" cy="9" r="2" fill="#fbe8c8" /><rect x="7" y="8" width="4" height="3" fill="#fbe8c8" /></svg>
        <span>american-culture-guide.pdf — LibreOffice Draw</span>
        <div className="ml-auto flex items-center pr-[20px] gap-[35px]">
          <svg width="10" height="10" stroke="#eee"><path d="M0 5.5h10" /></svg>
          <svg width="11" height="11" fill="none" stroke="#eee"><rect x=".5" y="2.5" width="8" height="8" rx="1" /><path d="M3 .5h7.5V8" /></svg>
          <svg width="11" height="11" stroke="#eee"><path d="M.5.5l10 10M10.5.5l-10 10" /></svg>
        </div>
      </div>
      {/* menu */}
      <div className="h-[24px] flex items-center gap-[15.5px] pl-[8px] pt-[5px] text-[12.3px] text-[#e4e4e4]">
        {menus.map(([a, b], i) => <span key={i}><u>{a}</u>{b}</span>)}
      </div>
      <Toolbar />
      {/* main */}
      <div className="flex-1 min-h-0 flex relative">
        <LeftTools />
        <PagesPanel />
        <div className="w-[7px]" />
        <div className="w-px bg-white mb-[2px]" />
        <Handle dir="l" className="left-[220px] top-[425px]" />
        <div className="flex-1 min-w-0 flex flex-col">
          <div className="flex h-[20px] pt-[4px]">
            <div className="w-[27px] relative">
              <svg width="14" height="14" className="ml-[11px]" stroke="#eee"><path d="M0 4.5h13M6.5 0v14" /></svg>
            </div>
            <HRuler />
          </div>
          <div className="flex flex-1 min-h-0">
            <div className="ml-[10px] w-[17px]"><VRuler /></div>
            <div className="relative flex-1 min-w-0 overflow-hidden">
              <Page />
              <MoveCursor />
            </div>
          </div>
          <div className="h-[15px] relative">
            <div className="absolute left-[296px] right-[312px] top-[8px] h-[2px] bg-[#8a8a8a]" />
          </div>
          <div className="h-[25px] flex items-center pt-[3px] text-[11.3px] text-[#e4e4e4]">
            <div className="ml-[19px] w-[91px] flex items-center gap-[12px]">
              {['M8 1 3 6l5 5zM1.5 1v10', 'M8 1 3 6l5 5z', 'M3 1l5 5-5 5z', 'M3 1l5 5-5 5zM9.5 1v10'].map((d, i) => (
                <svg key={i} width="10" height="12" fill="#eee" stroke="#eee"><path d={d} /></svg>
              ))}
            </div>
            <div className="w-[62px] h-full flex items-center justify-center font-bold border-b-[3px] border-white pt-[2px]">Layout</div>
            <div className="ml-[12px] pr-[12px] border-r border-white leading-[14px]">Controls</div>
            <div className="ml-[13px] pr-[11px] border-r border-white leading-[14px]">Dimension Lines</div>
          </div>
        </div>
        <div className="absolute left-[1863px] top-[182px] w-[2px] h-[347px] bg-[#8a8a8a]" />
        <Handle dir="r" className="left-[1873px] top-[425px]" />
        <Sidebar />
      </div>
      <div className="h-[2px] bg-white" />
      <Status />
      <TaskBar />
    </div>
  );
}
